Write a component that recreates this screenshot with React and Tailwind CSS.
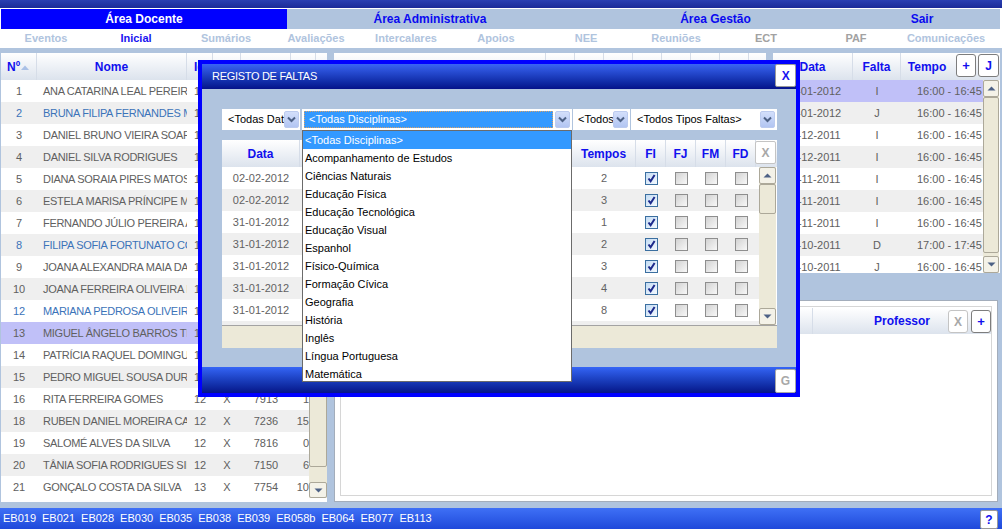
import React from 'react';

const students = [
  [1, 'ANA CATARINA LEAL PEREIRA', 0, '12', 'X', '7911', '2'],
  [2, 'BRUNA FILIPA FERNANDES MOTA', 1, '12', 'X', '7902', '4'],
  [3, 'DANIEL BRUNO VIEIRA SOARES', 0, '12', 'X', '7913', '1'],
  [4, 'DANIEL SILVA RODRIGUES', 0, '12', 'X', '7914', '0'],
  [5, 'DIANA SORAIA PIRES MATOS', 0, '12', 'X', '7915', '3'],
  [6, 'ESTELA MARISA PRÍNCIPE MOREIRA', 0, '12', 'X', '7916', '2'],
  [7, 'FERNANDO JÚLIO PEREIRA ALVES', 0, '12', 'X', '7917', '5'],
  [8, 'FILIPA SOFIA FORTUNATO COSTA', 1, '12', 'X', '7918', '1'],
  [9, 'JOANA ALEXANDRA MAIA DA SILVA', 0, '12', 'X', '7919', '0'],
  [10, 'JOANA FERREIRA OLIVEIRA LOPES', 0, '12', 'X', '7920', '2'],
  [12, 'MARIANA PEDROSA OLIVEIRA', 1, '12', 'X', '7922', '1'],
  [13, 'MIGUEL ÂNGELO BARROS TEIXEIRA', 2, '12', 'X', '7923', '3'],
  [14, 'PATRÍCIA RAQUEL DOMINGUES', 0, '12', 'X', '7924', '0'],
  [15, 'PEDRO MIGUEL SOUSA DURÃO', 0, '12', 'X', '7925', '2'],
  [16, 'RITA FERREIRA GOMES', 0, '12', 'X', '7913', '1'],
  [18, 'RUBEN DANIEL MOREIRA CAIADO', 0, '12', 'X', '7236', '15'],
  [19, 'SALOMÉ ALVES DA SILVA', 0, '12', 'X', '7816', '0'],
  [20, 'TÂNIA SOFIA RODRIGUES SILVA', 0, '12', 'X', '7150', '6'],
  [21, 'GONÇALO COSTA DA SILVA', 0, '13', 'X', '7754', '10'],
];

const subjects = [
  '<Todas Disciplinas>',
  'Acompanhamento de Estudos',
  'Ciências Naturais',
  'Educação Física',
  'Educação Tecnológica',
  'Educação Visual',
  'Espanhol',
  'Físico-Química',
  'Formação Cívica',
  'Geografia',
  'História',
  'Inglês',
  'Língua Portuguesa',
  'Matemática',
];

const faltas = [
  ['02-02-2012', '2'],
  ['02-02-2012', '3'],
  ['31-01-2012', '1'],
  ['31-01-2012', '2'],
  ['31-01-2012', '3'],
  ['31-01-2012', '4'],
  ['31-01-2012', '8'],
  ['31-01-2012', '1'],
];

const rightRows = [
  ['23-01-2012', 'I', '16:00 - 16:45'],
  ['16-01-2012', 'J', '16:00 - 16:45'],
  ['12-12-2011', 'I', '16:00 - 16:45'],
  ['05-12-2011', 'I', '16:00 - 16:45'],
  ['28-11-2011', 'I', '16:00 - 16:45'],
  ['21-11-2011', 'I', '16:00 - 16:45'],
  ['14-11-2011', 'I', '16:00 - 16:45'],
  ['24-10-2011', 'D', '17:00 - 17:45'],
  ['17-10-2011', 'J', '16:00 - 16:45'],
];

const tabs = [
  ['Área Docente', 'w-[286px] bg-[#0000ff] text-white'],
  ['Área Administrativa', 'w-[286px] bg-[#b0c4de] text-[#0a0af0]'],
  ['Área Gestão', 'w-[285px] bg-[#b0c4de] text-[#0a0af0]'],
  ['Sair', 'w-[128px] bg-[#b0c4de] text-[#0a0af0]'],
];

const subtabs = [
  ['Eventos', 'text-[#b0c4de]'],
  ['Inicial', 'text-[#1a14f0]'],
  ['Sumários', 'text-[#b0c4de]'],
  ['Avaliações', 'text-[#b0c4de]'],
  ['Intercalares', 'text-[#b0c4de]'],
  ['Apoios', 'text-[#b0c4de]'],
  ['NEE', 'text-[#b0c4de]'],
  ['Reuniões', 'text-[#b0c4de]'],
  ['ECT', 'text-[#a2a2a2]'],
  ['PAF', 'text-[#a2a2a2]'],
  ['Comunicações', 'text-[#b0c4de]'],
];

const bottomCodes = ['EB019', 'EB021', 'EB028', 'EB030', 'EB035', 'EB038', 'EB039', 'EB058b', 'EB064', 'EB077', 'EB113'];

function Arrow({ up }) {
  return (
    <svg width="9" height="5" viewBox="0 0 9 5">
      <path d={up ? 'M0.5 4.5 L4.5 0.5 L8.5 4.5 Z' : 'M0.5 0.5 L4.5 4.5 L8.5 0.5 Z'} fill="#4d6185" />
    </svg>
  );
}

function SBtn({ up, h }) {
  return (
    <div className={`flex w-full shrink-0 items-center justify-center rounded-[2px] border border-[#aca899] bg-[#f4f2e8] ${h}`}>
      <Arrow up={up} />
    </div>
  );
}

function ComboBtn({ extra }) {
  return (
    <div className={`flex h-[17px] w-[15px] shrink-0 items-center justify-center rounded-[2px] border border-[#bccbef] bg-linear-to-b from-[#d3dffb] to-[#b2c5f2] ${extra}`}>
      <svg width="9" height="7" viewBox="0 0 9 7">
        <path d="M1 1.5 L4.5 5 L8 1.5" fill="none" stroke="#4d6185" strokeWidth="2" />
      </svg>
    </div>
  );
}

function Check({ on }) {
  if (on) {
    return (
      <div className="flex h-[13px] w-[13px] items-center justify-center border border-[#3b6fa0] bg-linear-to-br from-[#c4dcf4] to-[#f4f9fe]">
        <svg width="9" height="9" viewBox="0 0 9 9">
          <path d="M1.5 4.5 L3.6 7.2 L7.6 1" fill="none" stroke="#1c2a8c" strokeWidth="2" />
        </svg>
      </div>
    );
  }
  return <div className="h-[13px] w-[13px] border border-[#8e8e8e] bg-linear-to-br from-[#d2d2d2] to-[#f8f8f8]" />;
}

function HeadCell({ w, children, cls = '' }) {
  return (
    <div className={`flex h-full shrink-0 items-center border-r border-[#d6dde8] ${w} ${cls}`}>{children}</div>
  );
}

function Modal() {
  return (
    <div className="absolute left-[198px] top-[60px] flex h-[337px] w-[602px] flex-col border-4 border-[#0000ff] bg-[#b0c4de]">
      {/* title */}
      <div className="relative flex h-[25px] shrink-0 items-center bg-linear-to-b from-[#3a64f4] to-[#06128a] pl-[10px] text-[11px] tracking-[-0.3px] text-white">
        REGISTO DE FALTAS
        <div className="absolute right-0 top-0 flex h-[23px] w-[21px] items-center justify-center rounded-[2px] border border-[#9a9a9a] bg-white text-[12px] font-bold text-[#1a14f0]">
          X
        </div>
      </div>
      {/* body */}
      <div className="h-[278px] shrink-0 pl-[20px] pt-[20px]">
        <div className="flex h-[21px] w-[555px] text-[11px]">
          <div className="flex w-[78px] items-center bg-white">
            <div className="w-[62px] overflow-hidden whitespace-nowrap pl-[6px] text-black">&lt;Todas Datas&gt;</div>
            <ComboBtn extra="" />
          </div>
          <div className="ml-[2px] flex w-[270px] items-center bg-white">
            <div className="ml-[2px] flex h-[17px] w-[249px] items-center border border-dotted border-[#d9a066] bg-[#3399ff] pl-[4px] text-white">
              &lt;Todas Disciplinas&gt;
            </div>
            <ComboBtn extra="ml-[2px]" />
          </div>
          <div className="ml-[1px] flex w-[57px] items-center bg-white">
            <div className="w-[40px] overflow-hidden whitespace-nowrap pl-[5px] text-black">&lt;Todos Tempos&gt;</div>
            <ComboBtn extra="" />
          </div>
          <div className="ml-[1px] flex w-[146px] items-center bg-white">
            <div className="whitespace-nowrap pl-[6px] text-black">&lt;Todos Tipos Faltas&gt;</div>
            <ComboBtn extra="ml-auto mr-[2px]" />
          </div>
        </div>

        <div className="mt-[10px] flex h-[208px] w-[555px] flex-col bg-white">
          <div className="flex h-[27px] shrink-0 bg-linear-to-b from-white to-[#dce3ed] text-[12px] font-bold text-[#1010ee]">
            <HeadCell w="w-[78px]" cls="justify-center">Data</HeadCell>
            <HeadCell w="w-[272px]" cls="pl-[8px]">Disciplina</HeadCell>
            <HeadCell w="w-[64px]" cls="justify-center">Tempos</HeadCell>
            <HeadCell w="w-[30px]" cls="justify-center">FI</HeadCell>
            <HeadCell w="w-[30px]" cls="justify-center">FJ</HeadCell>
            <HeadCell w="w-[30px]" cls="justify-center">FM</HeadCell>
            <HeadCell w="w-[30px]" cls="justify-center">FD</HeadCell>
            <div className="ml-[-1px] mt-[1px] flex h-[23px] w-[21px] items-center justify-center rounded-[2px] border border-[#c4c4c4] bg-white text-[12px] font-bold text-[#a8a8a8]">
              X
            </div>
          </div>
          <div className="flex h-[158px] shrink-0">
            <div className="flex w-[537px] flex-col overflow-hidden text-[11px] text-[#626262]">
              {faltas.map((r, i) => (
                <div key={i} className={`flex h-[22px] shrink-0 items-center ${i % 2 ? 'bg-[#efefef]' : 'bg-white'}`}>
                  <div className="w-[78px] text-center">{r[0]}</div>
                  <div className="w-[272px]" />
                  <div className="w-[64px] text-center">{r[1]}</div>
                  <div className="flex w-[30px] justify-center"><Check on /></div>
                  <div className="flex w-[30px] justify-center"><Check /></div>
                  <div className="flex w-[30px] justify-center"><Check /></div>
                  <div className="flex w-[30px] justify-center"><Check /></div>
                </div>
              ))}
            </div>
            <div className="flex w-[17px] flex-col bg-[#ece9d8]">
              <SBtn up h="h-[17px]" />
              <div className="h-[30px] shrink-0 rounded-[2px] border border-[#aca899] bg-[#ece9d8]" />
              <div className="flex-1" />
              <SBtn h="h-[17px]" />
            </div>
          </div>
          <div className="h-[23px] shrink-0 border-t border-[#a3a3a3] bg-[#ece9d8]" />
        </div>
      </div>
      {/* bottom bar */}
      <div className="relative h-[26px] shrink-0 bg-linear-to-b from-[#3565f6] to-[#071488]">
        <div className="absolute bottom-0 right-0 flex h-[24px] w-[21px] items-center justify-center rounded-[2px] border border-[#a8a8a8] bg-white text-[12px] font-bold text-[#a8a8a8]">
          G
        </div>
      </div>

      {/* open dropdown list */}
      <div className="absolute left-[100px] top-[66px] flex h-[252px] w-[270px] flex-col border border-[#6b6b6b] bg-white text-[11px] text-black">
        {subjects.map((s, i) => (
          <div key={s} className={`flex h-[18px] shrink-0 items-center pl-[2px] ${i === 0 ? 'bg-[#3399ff] text-white' : ''}`}>
            {s}
          </div>
        ))}
      </div>
    </div>
  );
}

export default function App() {
  return (
    <div className="relative h-[529px] w-[1002px] overflow-hidden bg-[#b0c4de] font-['Liberation_Sans',Arial,sans-serif]">
      {/* top band */}
      <div className="h-[8px] bg-linear-to-b from-[#2a3fb2] to-[#1b2a98]" />
      {/* main tabs */}
      <div className="flex h-[21px] border-t border-white bg-white pl-[1px] pr-[2px] text-[12px] font-bold">
        {tabs.map(([t, c]) => (
          <div key={t} className={`flex h-full items-center justify-center ${c}`}>{t}</div>
        ))}
        <div className="h-full flex-1 bg-[#b0c4de]" />
      </div>
      {/* sub tabs */}
      <div className="flex h-[19px] bg-white pl-[1px] text-[11px] font-bold">
        {subtabs.map(([t, c]) => (
          <div key={t} className={`flex h-full w-[90px] items-center justify-center ${c}`}>{t}</div>
        ))}
      </div>

      {/* main */}
      <div className="flex h-[460px] gap-[7px] pl-[1px] pt-[5px]">
        {/* left panel */}
        <div className="flex h-[449px] w-[326px] flex-col bg-white">
          <div className="flex h-[27px] shrink-0 bg-linear-to-b from-white to-[#dce3ed] text-[12px] font-bold text-[#1010ee]">
            <HeadCell w="w-[36px]" cls="pl-[6px]">
              Nº
              <svg className="ml-[1px] mt-[2px]" width="8" height="5" viewBox="0 0 8 5">
                <path d="M0 5 L4 0.5 L8 5 Z" fill="#a9c0e6" />
              </svg>
            </HeadCell>
            <HeadCell w="w-[150px]" cls="justify-center">Nome</HeadCell>
            <HeadCell w="w-[26px]" cls="overflow-hidden pl-[7px]">Idade</HeadCell>
            <HeadCell w="w-[28px]" cls="justify-center">E</HeadCell>
            <HeadCell w="w-[50px]" cls="justify-center">Proc</HeadCell>
            <HeadCell w="w-[25px]" cls="justify-center">F</HeadCell>
            <div className="flex-1" />
          </div>
          <div className="flex h-[418px] shrink-0">
            <div className="flex w-[308px] flex-col text-[11px]">
              {students.map(([n, name, kind, a, b, c, d], idx) => (
                <div
                  key={n}
                  className={`flex h-[22px] shrink-0 items-center ${
                    kind === 2 ? 'bg-[#c0c0f8]' : idx % 2 ? 'bg-[#efefef]' : 'bg-white'
                  } ${kind === 1 ? 'text-[#3b73b9]' : 'text-[#606060]'}`}
                >
                  <div className="w-[36px] shrink-0 text-center">{n}</div>
                  <div className="w-[150px] shrink-0 overflow-hidden whitespace-nowrap pl-[6px] tracking-[-0.3px]">{name}</div>
                  <div className="w-[26px] shrink-0 text-center text-[#606060]">{a}</div>
                  <div className="w-[28px] shrink-0 text-center text-[#606060]">{b}</div>
                  <div className="w-[50px] shrink-0 text-center text-[#606060]">{c}</div>
                  <div className="w-[18px] shrink-0 overflow-hidden whitespace-nowrap text-right text-[#606060]">{d}</div>
                </div>
              ))}
            </div>
            <div className="flex w-[18px] flex-col bg-[#ece9d8]">
              <SBtn up h="h-[17px]" />
              <div className="h-[370px] shrink-0 rounded-[2px] border border-[#aca899] bg-[#ece9d8]" />
              <div className="flex-1" />
              <SBtn h="h-[16px]" />
            </div>
          </div>
        </div>

        {/* right column */}
        <div className="flex w-[666px] flex-col gap-[25px]">
          <div className="flex h-[222px] gap-[7px]">
            {/* middle panel */}
            <div className="h-[220px] w-[432px] bg-white">
              <div className="flex h-[27px] bg-linear-to-b from-white to-[#dce3ed]">
                <HeadCell w="w-[212px]" />
                <HeadCell w="w-[29px]" />
                <HeadCell w="w-[29px]" />
                <HeadCell w="w-[29px]" />
                <HeadCell w="w-[29px]" />
                <HeadCell w="w-[29px]" />
                <HeadCell w="w-[29px]" />
                <HeadCell w="w-[29px]" />
              </div>
            </div>
            {/* right panel */}
            <div className="flex h-[220px] w-[227px] flex-col bg-white">
              <div className="flex h-[27px] shrink-0 bg-linear-to-b from-white to-[#dce3ed] text-[12px] font-bold text-[#1010ee]">
                <HeadCell w="w-[80px]" cls="justify-center">Data</HeadCell>
                <HeadCell w="w-[48px]" cls="justify-center">Falta</HeadCell>
                <div className="flex h-full w-[52px] items-center justify-center">Tempo</div>
                <div className="ml-[3px] mt-[1px] flex h-[23px] w-[20px] items-center justify-center rounded-[3px] border border-[#7d7d7d] bg-white text-[13px] font-bold text-[#1010ee]">+</div>
                <div className="ml-[2px] mt-[1px] flex h-[23px] w-[21px] items-center justify-center rounded-[3px] border border-[#7d7d7d] bg-white text-[12px] font-bold text-[#1010ee]">J</div>
              </div>
              <div className="flex h-[193px] shrink-0">
                <div className="flex w-[210px] flex-col overflow-hidden text-[11px] text-[#606060]">
                  {rightRows.map((r, i) => (
                    <div key={i} className={`flex h-[22px] shrink-0 items-center ${i === 0 ? 'bg-[#c0c0f8]' : i % 2 ? 'bg-[#efefef]' : 'bg-white'}`}>
                      <div className="w-[80px] shrink-0 text-center">{r[0]}</div>
                      <div className="w-[48px] shrink-0 text-center">{r[1]}</div>
                      <div className="w-[82px] shrink-0 overflow-hidden whitespace-nowrap pl-[16px]">{r[2]}</div>
                    </div>
                  ))}
                </div>
                <div className="flex w-[16px] flex-col bg-[#ece9d8]">
                  <SBtn up h="h-[17px]" />
                  <div className="h-[156px] shrink-0 rounded-[2px] border border-[#aca899] bg-[#ece9d8]" />
                  <div className="flex-1" />
                  <SBtn h="h-[17px]" />
                </div>
              </div>
            </div>
          </div>

          {/* lower panel */}
          <div className="flex h-[202px] w-[664px] flex-col border border-[#a3adbb] bg-white p-[5px]">
            <div className="relative flex-1 border border-[#d6d6d6]">
              <div className="mt-[1px] flex h-[26px] bg-linear-to-b from-white to-[#dce3ed] text-[12px] font-bold text-[#1010ee]">
                <HeadCell w="w-[472px]" />
                <div className="flex h-full flex-1 items-center justify-center">Professor</div>
              </div>
              <div className="absolute right-0 top-[3px] flex gap-[3px]">
                <div className="flex h-[23px] w-[20px] items-center justify-center rounded-[3px] border border-[#c4c4c4] bg-white text-[12px] font-bold text-[#a8a8a8]">X</div>
                <div className="flex h-[23px] w-[20px] items-center justify-center rounded-[3px] border border-[#7d7d7d] bg-white text-[13px] font-bold text-[#1010ee]">+</div>
              </div>
            </div>
          </div>
        </div>
      </div>

      {/* bottom bar */}
      <div className="flex h-[21px] items-center gap-[6px] bg-linear-to-b from-[#3f70f6] to-[#1f48da] pl-[3px] text-[11px] text-white">
        {bottomCodes.map((c) => (
          <span key={c}>{c}</span>
        ))}
        <div className="ml-auto mr-[4px] flex h-[19px] w-[18px] items-center justify-center self-end rounded-[2px] border border-[#9a9a9a] bg-white text-[12px] font-bold text-[#1010ee]">
          ?
        </div>
      </div>

      <Modal />
    </div>
  );
}
